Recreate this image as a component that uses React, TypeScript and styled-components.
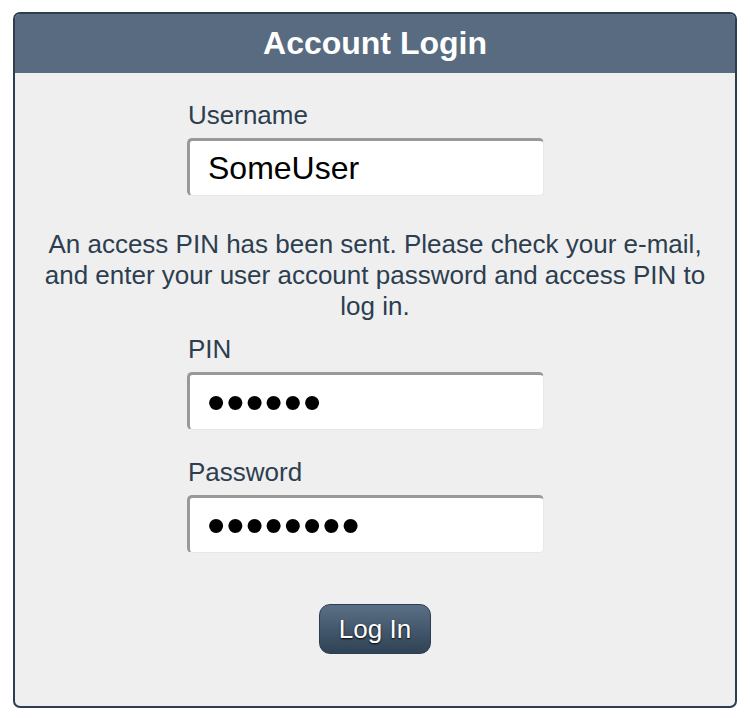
import React from 'react';
import styled, { createGlobalStyle } from 'styled-components';

const GlobalStyle = createGlobalStyle`
  html, body {
    margin: 0;
    padding: 0;
    background: #ffffff;
    font-family: "Liberation Sans", Arial, sans-serif;
  }
`;

const Page = styled.div`
  padding: 12px 13px 14px 13px;
`;

const Panel = styled.div`
  width: 724px;
  box-sizing: border-box;
  border: 2px solid #2c3e50;
  border-radius: 7px;
  background: #efefef;
  overflow: hidden;
`;

const Header = styled.div`
  height: 59px;
  background: #586b81;
  color: #ffffff;
  font-size: 32px;
  font-weight: bold;
  display: flex;
  align-items: center;
  justify-content: center;
`;

const Body = styled.div`
  display: flex;
  flex-direction: column;
  align-items: center;
  padding: 27px 0 52px;
`;

const Field = styled.div<{ $gap?: number }>`
  width: 376px;
  display: flex;
  flex-direction: column;
  margin-bottom: ${(p) => p.$gap ?? 27}px;
`;

const Label = styled.label`
  font-size: 26px;
  line-height: 30px;
  color: #2c3e50;
  margin: 0 0 8px 1px;
`;

const Input = styled.input<{ $secret?: boolean }>`
  width: 95%;
  height: 58px;
  box-sizing: border-box;
  border-style: solid;
  border-width: 3px 1px 1px 3px;
  border-color: #999999 #e8e8e8 #e8e8e8 #999999;
  border-radius: 5px;
  background: #ffffff;
  padding: 0 0 0 ${(p) => (p.$secret ? 17 : 18)}px;
  font-family: "Liberation Sans", Arial, sans-serif;
  font-size: ${(p) => (p.$secret ? 52 : 32)}px;
  letter-spacing: ${(p) => (p.$secret ? 1 : 0)}px;
  color: #000000;
  outline: none;
`;

const Notice = styled.p`
  margin: 0 0 12px;
  padding: 0 20px;
  text-align: center;
  font-size: 26px;
  line-height: 31px;
  color: #2c3e50;
`;

const Button = styled.button`
  margin-top: 51px;
  width: 112px;
  height: 50px;
  border: 1px solid #2c3e50;
  border-radius: 11px;
  background: linear-gradient(to bottom, #5a6e85 0%, #2f4356 100%);
  color: #ffffff;
  font-family: "Liberation Sans", Arial, sans-serif;
  font-size: 26px;
  text-shadow: 0 1px 2px #000000;
  cursor: pointer;
  padding: 0;
`;

const App = () => {
  return (
    <>
      <GlobalStyle />
      <Page>
        <Panel>
          <Header>Account Login</Header>
          <Body>
            <Field $gap={33}>
              <Label>Username</Label>
              <Input type="text" defaultValue="SomeUser" />
            </Field>
            <Notice>
              An access PIN has been sent. Please check your e-mail, and enter your user account
              password and access PIN to log in.
            </Notice>
            <Field>
              <Label>PIN</Label>
              <Input type="password" $secret defaultValue="123456" />
            </Field>
            <Field $gap={0}>
              <Label>Password</Label>
              <Input type="password" $secret defaultValue="12345678" />
            </Field>
            <Button>Log In</Button>
          </Body>
        </Panel>
      </Page>
    </>
  );
};

export default App;
